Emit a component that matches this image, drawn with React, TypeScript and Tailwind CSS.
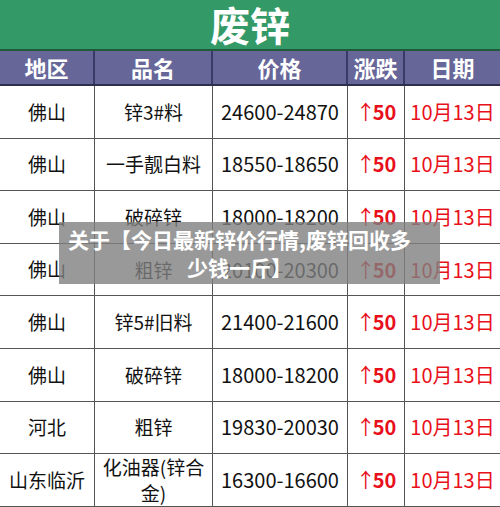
const rows = [
  ["佛山", "锌3#料", "24600-24870"],
  ["佛山", "一手靓白料", "18550-18650"],
  ["佛山", "破碎锌", "18000-18200"],
  ["佛山", "粗锌", "20100-20300"],
  ["佛山", "锌5#旧料", "21400-21600"],
  ["佛山", "破碎锌", "18000-18200"],
  ["河北", "粗锌", "19830-20030"],
  ["山东临沂", "化油器(锌合金)", "16300-16600"],
];

const cols = "grid grid-cols-[95px_118px_135px_57px_95px]";

export default function App() {
  return (
    <div
      className="relative w-[500px] h-[507px] overflow-hidden bg-white"
      style={{ fontFamily: '"Noto Sans CJK SC", "Noto Sans", sans-serif' }}
    >
      <div className="h-[51px] bg-[#339966] border-b-2 border-[#1f5a3c] flex items-center justify-center">
        <span className="text-white font-bold text-[40px] leading-[49px]">废锌</span>
      </div>
      <div className={`${cols} h-[35px] bg-[#666699] border-b-2 border-[#2e2e4e] text-white font-bold text-[22px]`}>
        {["地区", "品名", "价格", "涨跌", "日期"].map((h, i) => (
          <div
            key={h}
            className={`flex items-center justify-center ${i < 4 ? "border-r-2 border-[#3a3a66]" : ""}`}
          >
            {h}
          </div>
        ))}
      </div>
      {rows.map((r, idx) => (
        <div key={idx} className={`${cols} h-[52.6px] border-b border-[#555] text-[19px] text-[#111]`}>
          <div className="flex items-center justify-center border-r border-[#555]">{r[0]}</div>
          <div className="flex items-center justify-center text-center leading-[26px] px-1 border-r border-[#555]">{r[1]}</div>
          <div className="flex items-center justify-center border-r border-[#555] text-[20px]">{r[2]}</div>
          <div className="flex items-center justify-center border-r border-[#555] text-[#e8101a] font-bold text-[20px]">
            <span className="font-normal -mr-[3px]">↑</span>50
          </div>
          <div className="flex items-center justify-center text-[#e8101a] text-[20px]">10月13日</div>
        </div>
      ))}
      <div className="absolute left-[59px] top-[222px] w-[381px] h-[62px] bg-[#808080]/80 flex flex-col items-center justify-center pr-5">
        <p className="text-white font-bold text-[21px] leading-[28px] text-center whitespace-nowrap">
          关于【今日最新锌价行情,废锌回收多
        </p>
        <p className="text-white font-bold text-[21px] leading-[28px] text-center whitespace-nowrap">
          少钱一斤】
        </p>
      </div>
    </div>
  );
}
